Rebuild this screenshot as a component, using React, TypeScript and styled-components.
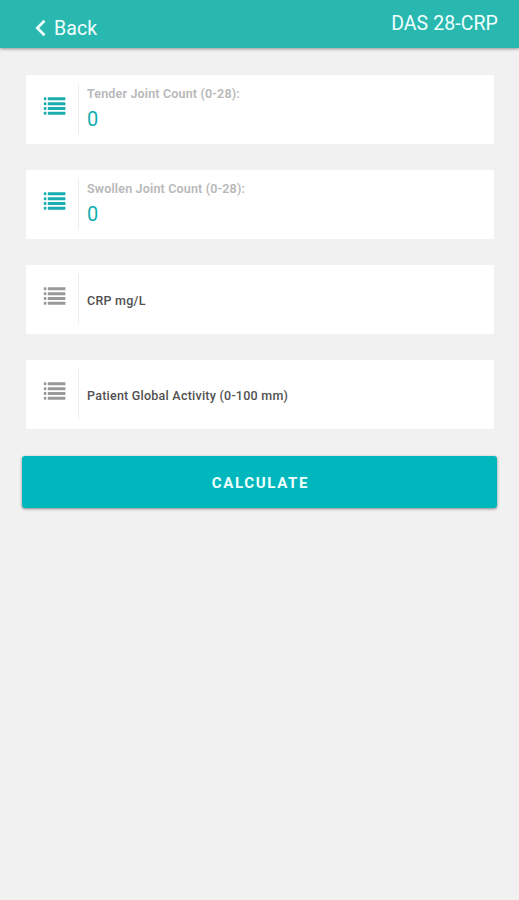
import React from "react";
import styled, { createGlobalStyle } from "styled-components";

const GlobalStyle = createGlobalStyle`
  * { box-sizing: border-box; }
  body { margin: 0; background: #f1f1f1; font-family: Roboto, "Liberation Sans", sans-serif; }
`;

const Screen = styled.main`
  min-height: 900px;
  background: #f1f1f1;
`;

const Header = styled.header`
  display: flex;
  justify-content: space-between;
  height: 48px;
  padding: 0 21px 0 35px;
  background: #29b8b0;
  color: #f0fffd;
  box-shadow: 0 1px 3px rgba(0, 0, 0, 0.4);
`;

const BackButton = styled.button`
  display: flex;
  align-items: center;
  gap: 8px;
  height: 24px;
  margin-top: 16px;
  padding: 0;
  border: 0;
  background: none;
  color: inherit;
  font: 400 19.5px/24px Roboto, sans-serif;
  letter-spacing: 0.1px;
`;

const BackText = styled.span`
  padding-top: 2px;
`;

const Title = styled.h1`
  margin: 11px 0 0;
  padding-top: 1px;
  font-size: 19.5px;
  line-height: 24px;
  font-weight: 400;
  letter-spacing: 0.08px;
`;

const Form = styled.form`
  display: flex;
  flex-direction: column;
  gap: 26px;
  padding: 27px 22px 0;
`;

const Card = styled.label`
  display: flex;
  height: 69px;
  margin: 0 3px 0 4px;
  padding: 9px 0 10px 17px;
  border-radius: 2px;
  background: #fff;
`;

const IconCell = styled.span<{ $active: boolean }>`
  width: 36px;
  padding-top: 13px;
  border-right: 1px solid #ececec;
  color: ${(p) => (p.$active ? "#19adb0" : "#999")};
  svg { display: block; }
`;

const Field = styled.span<{ $filled: boolean }>`
  display: flex;
  flex-direction: column;
  padding: ${(p) => (p.$filled ? "2px" : "19px")} 0 0 8px;
`;

const Label = styled.span<{ $filled: boolean }>`
  color: ${(p) => (p.$filled ? "#b8b8b8" : "#505050")};
  font-size: 12.5px;
  line-height: 15px;
  font-weight: ${(p) => (p.$filled ? 600 : 500)};
  letter-spacing: ${(p) => (p.$filled ? 0.17 : 0.24)}px;
`;

const Value = styled.span`
  margin-top: 6px;
  color: #12adb0;
  font-size: 20px;
  line-height: 24px;
`;

const CalculateButton = styled.button`
  height: 52px;
  margin-top: 0.5px;
  padding: 3px 0 0 2px;
  border: 0;
  border-radius: 3px;
  background: #00b7bd;
  color: #f0ffff;
  box-shadow: 0 1px 3px rgba(0, 0, 0, 0.45);
  font: 700 15px/20px Roboto, sans-serif;
  letter-spacing: 1.65px;
`;

const ListIcon = () => (
  <svg width="23" height="19" viewBox="0 0 23 19" fill="currentColor">
    {[0.2, 5.2, 10, 14.8].map((y) => (
      <g key={y}>
        <rect x="0.8" y={y} width="2.6" height="3" rx="0.8" />
        <rect x="4.8" y={y} width="17.6" height="3" rx="0.3" />
      </g>
    ))}
  </svg>
);

const fields = [
  { label: "Tender Joint Count (0-28):", value: "0" },
  { label: "Swollen Joint Count (0-28):", value: "0" },
  { label: "CRP mg/L" },
  { label: "Patient Global Activity (0-100 mm)" },
];

export default function App() {
  return (
    <Screen>
      <GlobalStyle />
      <Header>
        <BackButton type="button">
          <svg width="11" height="18" viewBox="0 0 11 18" fill="none" stroke="currentColor" strokeWidth="2.7">
            <path d="M9.5 1.8 2.3 9l7.2 7.2" />
          </svg>
          <BackText>Back</BackText>
        </BackButton>
        <Title>DAS 28-CRP</Title>
      </Header>
      <Form>
        {fields.map(({ label, value }) => {
          const filled = value !== undefined;
          return (
            <Card key={label}>
              <IconCell $active={filled}>
                <ListIcon />
              </IconCell>
              <Field $filled={filled}>
                <Label $filled={filled}>{label}</Label>
                {filled && <Value>{value}</Value>}
              </Field>
            </Card>
          );
        })}
        <CalculateButton type="button">CALCULATE</CalculateButton>
      </Form>
    </Screen>
  );
}
